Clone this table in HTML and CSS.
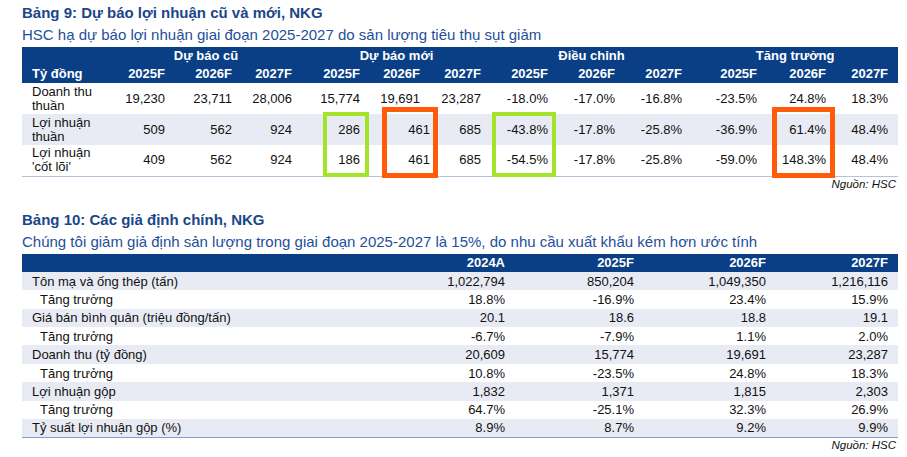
FILE: index.html
```html
<!DOCTYPE html>
<html lang="vi">
<head>
<meta charset="utf-8">
<link rel="stylesheet" href="styles.css">
</head>
<body>
<div class="page">
  <section class="block block-one">
    <h2 class="title">Bảng 9: Dự báo lợi nhuận cũ và mới, NKG</h2>
    <p class="subtitle">HSC hạ dự báo lợi nhuận giai đoạn 2025-2027 do sản lượng tiêu thụ sụt giảm</p>
    <div class="table-wrap">
      <table class="t1">
        <colgroup>
          <col class="w-label"><col class="w65"><col class="w67"><col class="w60"><col class="w68"><col class="w60"><col class="w61"><col class="w67"><col class="w67"><col class="w67"><col class="w75"><col class="w69"><col class="w62">
        </colgroup>
        <thead>
          <tr class="grp">
            <th></th>
            <th colspan="3" class="center">Dự báo cũ</th>
            <th colspan="3" class="center">Dự báo mới</th>
            <th colspan="3" class="center">Điều chỉnh</th>
            <th colspan="3" class="center">Tăng trưởng</th>
          </tr>
          <tr class="yrs">
            <th class="lbl">Tỷ đồng</th>
            <th>2025F</th><th>2026F</th><th>2027F</th>
            <th>2025F</th><th>2026F</th><th>2027F</th>
            <th>2025F</th><th>2026F</th><th>2027F</th>
            <th>2025F</th><th>2026F</th><th>2027F</th>
          </tr>
        </thead>
        <tbody>
          <tr>
            <td class="lbl">Doanh thu<br>thuần</td>
            <td>19,230</td><td>23,711</td><td>28,006</td>
            <td>15,774</td><td>19,691</td><td>23,287</td>
            <td>-18.0%</td><td>-17.0%</td><td>-16.8%</td>
            <td>-23.5%</td><td>24.8%</td><td>18.3%</td>
          </tr>
          <tr class="alt">
            <td class="lbl">Lợi nhuận<br>thuần</td>
            <td>509</td><td>562</td><td>924</td>
            <td>286</td><td class="shift">461</td><td>685</td>
            <td>-43.8%</td><td>-17.8%</td><td>-25.8%</td>
            <td>-36.9%</td><td>61.4%</td><td>48.4%</td>
          </tr>
          <tr>
            <td class="lbl">Lợi nhuận<br>'cốt lõi'</td>
            <td>409</td><td>562</td><td>924</td>
            <td>186</td><td class="shift">461</td><td>685</td>
            <td>-54.5%</td><td>-17.8%</td><td>-25.8%</td>
            <td>-59.0%</td><td>148.3%</td><td>48.4%</td>
          </tr>
        </tbody>
      </table>
      <span class="mark green g1"></span>
      <span class="mark orange o1"></span>
      <span class="mark green g2"></span>
      <span class="mark orange o2"></span>
    </div>
    <p class="source">Nguồn: HSC</p>
  </section>

  <section class="block block-two">
    <h2 class="title">Bảng 10: Các giả định chính, NKG</h2>
    <p class="subtitle">Chúng tôi giảm giả định sản lượng trong giai đoạn 2025-2027 là 15%, do nhu cầu xuất khẩu kém hơn ước tính</p>
    <table class="t2">
      <colgroup>
        <col class="w2-label"><col class="w2-a"><col class="w2-b"><col class="w2-c"><col class="w2-d">
      </colgroup>
      <thead>
        <tr>
          <th></th><th>2024A</th><th>2025F</th><th>2026F</th><th>2027F</th>
        </tr>
      </thead>
      <tbody>
        <tr class="alt"><td class="lbl">Tôn mạ và ống thép (tấn)</td><td>1,022,794</td><td>850,204</td><td>1,049,350</td><td>1,216,116</td></tr>
        <tr><td class="lbl sub">Tăng trưởng</td><td>18.8%</td><td>-16.9%</td><td>23.4%</td><td>15.9%</td></tr>
        <tr class="alt"><td class="lbl">Giá bán bình quân (triệu đồng/tấn)</td><td>20.1</td><td>18.6</td><td>18.8</td><td>19.1</td></tr>
        <tr><td class="lbl sub">Tăng trưởng</td><td>-6.7%</td><td>-7.9%</td><td>1.1%</td><td>2.0%</td></tr>
        <tr class="alt"><td class="lbl">Doanh thu (tỷ đồng)</td><td>20,609</td><td>15,774</td><td>19,691</td><td>23,287</td></tr>
        <tr><td class="lbl sub">Tăng trưởng</td><td>10.8%</td><td>-23.5%</td><td>24.8%</td><td>18.3%</td></tr>
        <tr class="alt"><td class="lbl">Lợi nhuận gộp</td><td>1,832</td><td>1,371</td><td>1,815</td><td>2,303</td></tr>
        <tr><td class="lbl sub">Tăng trưởng</td><td>64.7%</td><td>-25.1%</td><td>32.3%</td><td>26.9%</td></tr>
        <tr class="alt"><td class="lbl">Tỷ suất lợi nhuận gộp (%)</td><td>8.9%</td><td>8.7%</td><td>9.2%</td><td>9.9%</td></tr>
      </tbody>
    </table>
    <p class="source">Nguồn: HSC</p>
  </section>
</div>
</body>
</html>
```

FILE: styles.css
```css
html, body {
  margin: 0;
  padding: 0;
  background: #ffffff;
}

.page {
  width: 876px;
  padding: 4px 9px 0 22px;
  font-family: "Liberation Sans", Arial, sans-serif;
  color: #111111;
}

.title {
  margin: 0;
  font-size: 15px;
  line-height: 18px;
  font-weight: bold;
  color: #1a468a;
}

.subtitle {
  margin: 4px 0 3px;
  font-size: 15px;
  line-height: 18px;
  color: #1f4f9a;
}

.table-wrap {
  position: relative;
}

table {
  width: 876px;
  border-collapse: collapse;
  table-layout: fixed;
  font-size: 13px;
}

th, td {
  padding: 0 10px 0 0;
  text-align: right;
  white-space: nowrap;
  overflow: visible;
}

th {
  color: #ffffff;
  font-weight: bold;
  background: #0a3f86;
}

th.center {
  text-align: center;
  padding: 0;
}

.lbl {
  text-align: left;
  padding-left: 10px;
}

.sub {
  padding-left: 18px;
}

tr.alt td {
  background: #e8ebf3;
}

/* Table 1 */
.w-label { width: 88px; }
.w60 { width: 60px; }
.w61 { width: 61px; }
.w62 { width: 62px; }
.w65 { width: 65px; }
.w67 { width: 67px; }
.w68 { width: 68px; }
.w69 { width: 69px; }
.w75 { width: 75px; }

.t1 thead tr {
  height: 18px;
}

.t1 th {
  line-height: 18px;
}

.t1 tbody tr {
  height: 31px;
}

.t1 td {
  line-height: 14px;
  vertical-align: middle;
}

.t1 td.shift {
  padding-right: 0;
}

.t1 tbody tr:last-child td {
  border-bottom: 1px solid #b3c3da;
}

.mark {
  position: absolute;
  box-sizing: border-box;
  pointer-events: none;
}

.green {
  border: 4px solid #a5e22a;
}

.orange {
  border: 5px solid #ff5b0a;
}

.g1 { left: 301px; top: 65px; width: 46px; height: 65px; }
.o1 { left: 360px; top: 60px; width: 56px; height: 71px; }
.g2 { left: 470px; top: 65px; width: 64px; height: 65px; }
.o2 { left: 750px; top: 60px; width: 63px; height: 71px; }

.source {
  margin: 0;
  text-align: right;
  font-size: 11.5px;
  line-height: 14px;
  font-style: italic;
  color: #111111;
  padding-right: 2px;
}

.block-two {
  margin-top: 20px;
}

/* Table 2 */
.w2-label { width: 371px; }
.w2-a { width: 122px; }
.w2-b { width: 129px; }
.w2-c { width: 132px; }
.w2-d { width: 122px; }

.t2 tr {
  height: 18.4px;
}

.t2 th, .t2 td {
  line-height: 17px;
}

.t2 tbody tr:last-child td {
  border-bottom: 1px solid #7f9fcc;
}
```
